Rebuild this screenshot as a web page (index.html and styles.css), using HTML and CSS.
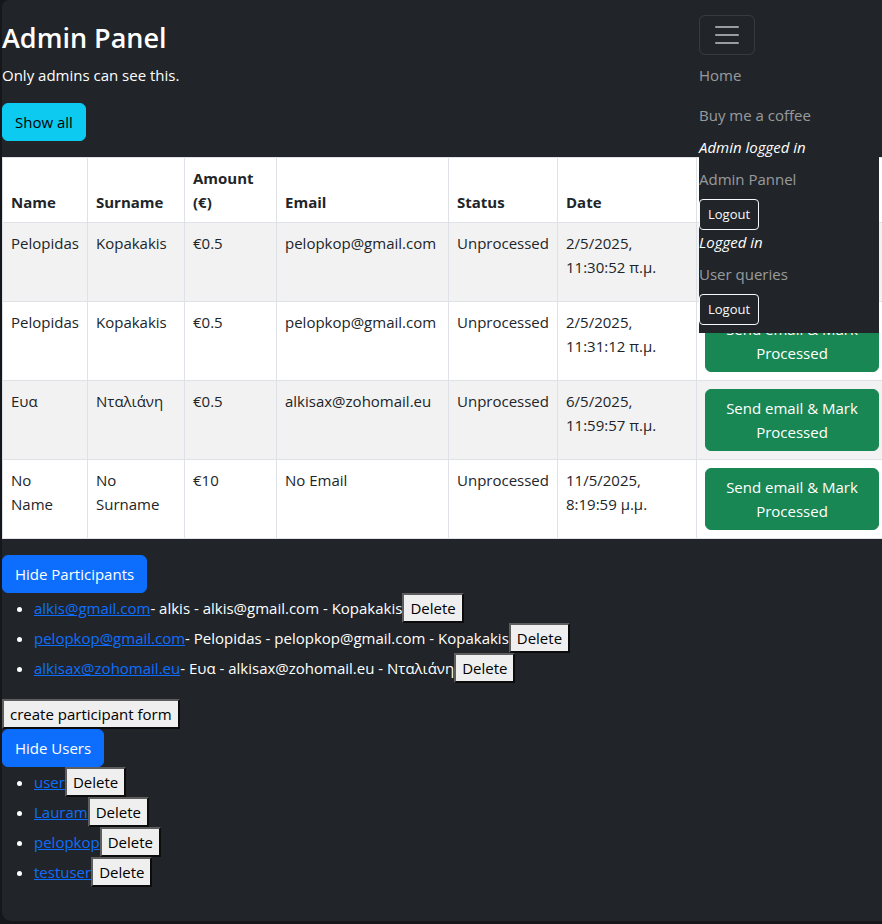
FILE: index.html
```html
<!DOCTYPE html>
<html lang="en">
<head>
<meta charset="utf-8">
<title>Admin Panel</title>
<link rel="stylesheet" href="styles.css">
</head>
<body>
<div class="page">
  <nav class="navbar">
    <button class="toggler" aria-label="Toggle navigation">
      <svg width="30" height="30" viewBox="0 0 30 30"><path d="M4 7h22M4 15h22M4 23h22" stroke="rgba(255,255,255,0.55)" stroke-width="2" stroke-linecap="round" stroke-miterlimit="10" fill="none"/></svg>
    </button>
    <ul class="nav-list">
      <li><a class="nav-link" href="#">Home</a></li>
      <li><a class="nav-link" href="#">Buy me a coffee</a></li>
      <li class="nav-status"><em>Admin logged in</em></li>
      <li><a class="nav-link" href="#">Admin Pannel</a></li>
      <li><button class="btn-logout">Logout</button></li>
      <li class="nav-status"><em>Logged in</em></li>
      <li><a class="nav-link" href="#">User queries</a></li>
      <li><button class="btn-logout">Logout</button></li>
    </ul>
  </nav>

  <main class="main">
    <h2 class="title">Admin Panel</h2>
    <p class="intro">Only admins can see this.</p>
    <div class="block-gap"><button class="btn btn-info">Show all</button></div>

    <table class="data">
      <colgroup>
        <col class="c-name"><col class="c-surname"><col class="c-amount"><col class="c-email"><col class="c-status"><col class="c-date"><col class="c-action">
      </colgroup>
      <thead>
        <tr><th>Name</th><th>Surname</th><th>Amount (€)</th><th>Email</th><th>Status</th><th>Date</th><th></th></tr>
      </thead>
      <tbody>
        <tr><td class="name">Pelopidas</td><td>Kopakakis</td><td>€0.5</td><td>pelopkop@gmail.com</td><td>Unprocessed</td><td>2/5/2025, 11:30:52 π.μ.</td><td><button class="btn btn-success btn-block">Send email &amp; Mark Processed</button></td></tr>
        <tr><td class="name">Pelopidas</td><td>Kopakakis</td><td>€0.5</td><td>pelopkop@gmail.com</td><td>Unprocessed</td><td>2/5/2025, 11:31:12 π.μ.</td><td><button class="btn btn-success btn-block">Send email &amp; Mark Processed</button></td></tr>
        <tr><td class="name">Ευα</td><td>Νταλιάνη</td><td>€0.5</td><td>alkisax@zohomail.eu</td><td>Unprocessed</td><td>6/5/2025, 11:59:57 π.μ.</td><td><button class="btn btn-success btn-block">Send email &amp; Mark Processed</button></td></tr>
        <tr><td class="name">No Name</td><td>No Surname</td><td>€10</td><td>No Email</td><td>Unprocessed</td><td>11/5/2025, 8:19:59 μ.μ.</td><td><button class="btn btn-success btn-block">Send email &amp; Mark Processed</button></td></tr>
      </tbody>
    </table>

    <div><button class="btn btn-primary">Hide Participants</button></div>
    <ul class="items">
      <li><a href="#">alkis@gmail.com</a>- alkis - alkis@gmail.com - Kopakakis<button class="plain">Delete</button></li>
      <li><a href="#">pelopkop@gmail.com</a>- Pelopidas - pelopkop@gmail.com - Kopakakis<button class="plain">Delete</button></li>
      <li><a href="#">alkisax@zohomail.eu</a>- Ευα - alkisax@zohomail.eu - Νταλιάνη<button class="plain">Delete</button></li>
    </ul>
    <div><button class="plain">create participant form</button></div>
    <div><button class="btn btn-primary">Hide Users</button></div>
    <ul class="items">
      <li><a href="#">user</a><button class="plain">Delete</button></li>
      <li><a href="#">Lauram</a><button class="plain">Delete</button></li>
      <li><a href="#">pelopkop</a><button class="plain">Delete</button></li>
      <li><a href="#">testuser</a><button class="plain">Delete</button></li>
    </ul>
  </main>
</div>
</body>
</html>
```
FILE: styles.css
```css
html, body {
  margin: 0;
  padding: 0;
}

body {
  background: #15171b;
  font-family: "Open Sans", "Noto Sans", sans-serif;
  font-size: 15px;
  line-height: 24px;
  color: #fff;
  overflow: hidden;
}

.page {
  position: relative;
  margin-left: 2px;
  height: 921px;
  background: #212529;
  border-top-left-radius: 7px;
  border-bottom-left-radius: 9px;
}

.main {
  padding-top: 20px;
}

.title {
  margin: 0 0 8px;
  font-size: 27px;
  line-height: 35px;
  font-weight: 600;
}

.intro {
  margin: 0 0 16px;
}

.block-gap {
  margin-bottom: 16px;
}

/* buttons */
.btn {
  display: inline-block;
  margin: 0;
  font: inherit;
  line-height: 24px;
  padding: 6px 12px;
  border: 1px solid transparent;
  border-radius: 6px;
  text-align: center;
  cursor: pointer;
}

.btn-info {
  background: #0dcaf0;
  border-color: #0dcaf0;
  color: #000;
}

.btn-primary {
  background: #0d6efd;
  border-color: #0d6efd;
  color: #fff;
}

.btn-success {
  background: #198754;
  border-color: #198754;
  color: #fff;
}

.btn-block {
  display: block;
  width: 100%;
}

.plain {
  margin: 0;
  font: inherit;
  line-height: 24px;
  padding: 1px 6px;
  border-width: 2px;
  border-style: solid;
  border-color: #5e5e5e #0c0c0c #0c0c0c #5e5e5e;
  border-radius: 0;
  background: #efefef;
  color: #000;
}

/* table */
.data {
  border-collapse: collapse;
  table-layout: fixed;
  width: 885px;
  margin-bottom: 16px;
  background: #fff;
  color: #212529;
}

.c-name { width: 85px; }
.c-surname { width: 97px; }
.c-amount { width: 92px; }
.c-email { width: 172px; }
.c-status { width: 109px; }
.c-date { width: 139px; }
.c-action { width: 191px; }

.data th,
.data td {
  border: 1px solid #dee2e6;
  padding: 8px;
  text-align: left;
  vertical-align: top;
}

.data td.name {
  padding-right: 14px;
}

.data thead th {
  vertical-align: bottom;
  font-weight: 700;
}

.data tbody tr:nth-child(odd) td {
  background: #f2f2f2;
}

/* lists */
.items {
  margin: 0 0 16px;
  padding-left: 32px;
}

.items a {
  color: #0d6efd;
  text-decoration: underline;
}

/* navbar overlay */
.navbar {
  position: absolute;
  top: 0;
  left: 697px;
  width: 180px;
  padding: 15px 0 8px;
  background: #212529;
  z-index: 2;
}

.toggler {
  display: block;
  width: 56px;
  height: 40px;
  margin: 0;
  padding: 4px 12px;
  background: transparent;
  border: 1px solid rgba(255, 255, 255, 0.1);
  border-radius: 6px;
}

.toggler svg {
  display: block;
}

.nav-list {
  list-style: none;
  margin: 0;
  padding: 0;
}

.nav-link {
  display: block;
  padding: 8px 0;
  color: rgba(255, 255, 255, 0.55);
  text-decoration: none;
}

.nav-status {
  color: #fff;
  height: 24px;
}

.btn-logout {
  display: block;
  margin: 0;
  font: inherit;
  font-size: 13px;
  line-height: 21px;
  padding: 4px 8px;
  background: transparent;
  color: #f8f9fa;
  border: 1px solid #f8f9fa;
  border-radius: 4px;
}
```
